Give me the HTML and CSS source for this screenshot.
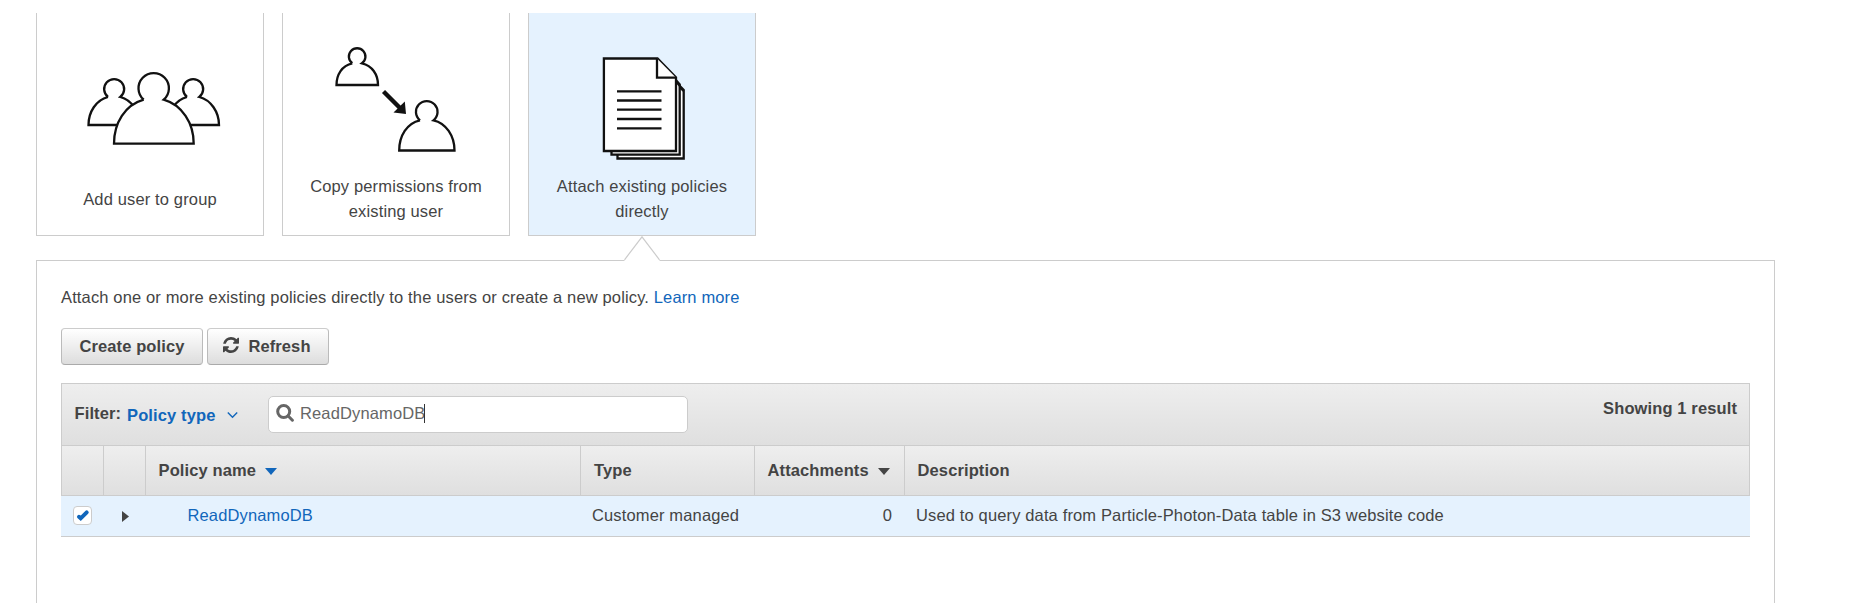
FILE: index.html
```html
<!DOCTYPE html>
<html lang="en">
<head>
<meta charset="utf-8">
<title>Set permissions</title>
<link rel="stylesheet" href="styles.css">
</head>
<body>
<div class="options">
  <div class="card">
    <svg class="art" viewBox="37 13 226 150">
      <path d="M108 97A10 10 0 1 1 120.3 97C132 100 139.500 112 139.500 125H88.500C88.500 112 96 100 108 97"/>
      <path d="M187 97A10 10 0 1 1 199.300 97C211 100 219 112 219 125H168C168 112 175 100 187 97"/>
      <path d="M143.700 99.700A15.200 15.200 0 1 1 163.700 99.700C182 105 193.700 123 193.700 143.700H114C114 123 125 105 143.700 99.700"/>
    </svg>
    <div class="label">Add user to group</div>
  </div>
  <div class="card">
    <svg class="art" viewBox="283 13 226 150">
      <path d="M352.300 63.300A8.300 8.300 0 1 1 362 63.300C372 65.500 378 74.500 378 85H336.500C336.500 74.500 342 65.500 352.300 63.300"/>
      <path d="M420 120.300A10.800 10.800 0 1 1 433.500 120.300C446 123 454.500 136 454.500 150.500H399.200C399.200 136 407 123 420 120.300"/>
      <path class="shaft" d="M383.500 91.500L400 108"/>
      <path class="head" d="M406 114L393.500 112.500L404.800 101.500Z"/>
    </svg>
    <div class="label">Copy permissions from<br>existing user</div>
  </div>
  <div class="card selected">
    <svg class="art" viewBox="529 13 226 150">
      <path d="M617.500 151V158.500H683.700V90L676 82V151Z"/>
      <path d="M678 86L683.700 91"/>
      <path d="M611.500 150V154.700H679.700V84.500L675 79V150Z"/>
      <path d="M675 80.500L680 86"/>
      <path d="M603.900 58.500H657.500L676 77.500V151H603.900Z"/>
      <path d="M657 58.500V77.700H676"/>
      <path d="M617 91.300h44.500M617 100.500h44.500M617 109.700h44.500M617 119h44.500M617 128.300h44.500"/>
    </svg>
    <div class="label">Attach existing policies<br>directly</div>
  </div>
</div>
<div class="panel">
  <svg class="notch" viewBox="0 0 36 25"><path d="M0.500 24L18 0.800L35.500 24V25H0.500Z" fill="#fff"/><path d="M0.500 23.800L18 0.800L35.500 23.800" fill="none" stroke="#ccc" stroke-width="1.200"/></svg>
  <p class="intro">Attach one or more existing policies directly to the users or create a new policy. <a>Learn more</a></p>
  <div class="buttons">
    <button class="btn create">Create policy</button>
    <button class="btn refresh"><svg class="sync" viewBox="0 0 1536 1536"><path fill="#444" d="M1511 928q0 5-1 7-64 268-268 434.500T764 1536q-146 0-282.500-55T238 1324l-129 129q-19 19-45 19t-45-19-19-45V960q0-26 19-45t45-19h448q26 0 45 19t19 45-19 45l-137 137q71 66 161 102t187 36q134 0 250-65t186-179q11-17 53-117 8-23 30-23h192q13 0 22.500 9.500t9.500 22.500zM1536 128v448q0 26-19 45t-45 19h-448q-26 0-45-19t-19-45 19-45l138-138Q969 256 768 256q-134 0-250 65T332 500q-11 17-53 117-8 23-30 23H50q-13 0-22.500-9.500T18 608v-7q65-268 270-434.500T768 0q146 0 284 55.500T1297 212l130-129q19-19 45-19t45 19 19 45z"/></svg>Refresh</button>
  </div>
  <div class="table">
    <div class="filter">
      <span class="filter-label">Filter:</span>
      <span class="filter-type">Policy type</span>
      <svg class="chevron" viewBox="0 0 11 8"><path d="M0.800 1.500L5.500 6.300L10.200 1.500" fill="none" stroke="#1166bb" stroke-width="1.400"/></svg>
      <div class="search">
        <svg class="lens" viewBox="0 0 18 18"><circle cx="7.700" cy="7.500" r="6" fill="none" stroke="#666" stroke-width="3"/><path d="M12.200 12L16.400 16.200" stroke="#666" stroke-width="3" stroke-linecap="round"/></svg>
        <span>ReadDynamoDB</span><i class="caret"></i>
      </div>
      <span class="count">Showing 1 result</span>
    </div>
    <div class="row heading">
      <div></div><div></div>
      <div>Policy name<svg class="sort" viewBox="0 0 12 7"><path d="M0 0H12L6 7Z" fill="#1166bb"/></svg></div>
      <div class="type">Type</div>
      <div>Attachments<svg class="sort" viewBox="0 0 12 7"><path d="M0 0H12L6 7Z" fill="#444"/></svg></div>
      <div>Description</div>
    </div>
    <div class="row item">
      <div class="check"><span class="box"><svg viewBox="0 0 17 17"><path d="M5 9.800L6.700 11.300L12.700 5.300" fill="none" stroke="#1166bb" stroke-width="4" stroke-linecap="round"/></svg></span></div>
      <div class="expand"><svg viewBox="0 0 7 11"><path d="M0 0L7 5.500L0 11Z" fill="#444"/></svg></div>
      <div class="name"><a>ReadDynamoDB</a></div>
      <div>Customer managed</div>
      <div class="number">0</div>
      <div>Used to query data from Particle-Photon-Data table in S3 website code</div>
    </div>
  </div>
</div>
</body>
</html>
```
FILE: styles.css
```css
* { box-sizing: border-box; }
body {
  margin: 0;
  height: 603px;
  padding: 13px 98px 0 36px;
  display: flex;
  flex-direction: column;
  background: #fff;
  color: #444;
  font: 16.5px/25px "Liberation Sans", Arial, sans-serif;
  letter-spacing: 0.14px;
}
svg { display: block; flex: none; }
a { color: #1166bb; }
.options { display: flex; gap: 18px; flex: none; }
.card { width: 228px; height: 223px; border: 1px solid #ccc; border-top: 0; display: flex; flex-direction: column; }
.selected { background: #e5f2fe; }
.art { width: 226px; height: 150px; }
.art path { fill: #fff; stroke: #111; stroke-width: 2.3; }
.art .shaft { stroke-width: 4.4; }
.art .head { fill: #111; stroke: none; }
.label { flex: 1; display: flex; align-items: center; justify-content: center; text-align: center; }
.panel { position: relative; flex: 1; margin-top: 24px; border: 1px solid #ccc; border-bottom: 0; padding: 24px 24px 0; }
.notch { position: absolute; left: 587px; top: -25px; width: 36px; height: 25px; }
.intro { margin: 0; }
.buttons { display: flex; gap: 4px; margin-top: 18px; }
.btn {
  height: 37px;
  padding: 0;
  border: 1px solid #bbb;
  border-top-color: #ccc;
  border-bottom-color: #aaa;
  border-radius: 4px;
  background: linear-gradient(#fff, #ddd);
  color: #444;
  font: bold 16.5px/25px "Liberation Sans", Arial, sans-serif;
  letter-spacing: 0.1px;
  display: flex;
  align-items: center;
  justify-content: center;
}
.create { width: 142px; }
.refresh { width: 122px; gap: 9px; padding-right: 2px; }
.sync { width: 16px; height: 16px; margin-top: -3px; }
.table { margin-top: 18px; }
.filter {
  height: 63px;
  border: 1px solid #ccc;
  background: linear-gradient(#eee, #dfdfdf);
  display: flex;
  align-items: flex-start;
  padding: 12px 12px 0 12.5px;
  font-weight: bold;
  letter-spacing: 0.12px;
}
.filter-label { margin-top: 5px; width: 52.5px; }
.filter-type { margin-top: 7px; color: #1166bb; width: 100px; }
.chevron { width: 11px; height: 8px; margin-top: 15px; }
.search {
  margin-left: 30px;
  width: 420px;
  height: 37px;
  border: 1px solid #ccc;
  border-radius: 5px;
  background: #fff;
  color: #666;
  font-weight: normal;
  letter-spacing: 0.13px;
  display: flex;
  align-items: flex-start;
  padding: 4px 7px;
}
.lens { width: 18px; height: 18px; margin: 3px 6px 0 0; }
.caret { width: 1px; height: 19px; background: #333; margin: 3px 0 0 -1px; }
.count { margin-left: auto; }
.row { display: grid; grid-template-columns: 42px 42px 435px 174px 150px 1fr; }
.heading { height: 50px; grid-template-columns: 41px 42px 435px 174px 150px 1fr; border: 1px solid #ccc; border-top: 0; background: linear-gradient(#eee, #dfdfdf); font-weight: bold; letter-spacing: 0.12px; }
.heading div { border-left: 1px solid #ccc; display: flex; align-items: center; padding-left: 12.5px; }
.heading div:first-child { border-left: 0; }
.heading .type { padding-left: 13px; }
.sort { width: 12px; height: 7px; margin: 2px 0 0 9px; }
.item { height: 41px; background: #e5f2fe; border-bottom: 1px solid #ccc; }
.item div { display: flex; align-items: center; padding: 0 0 2px 12px; }
.box { width: 19px; height: 19px; border: 1px solid #ccc; border-radius: 4px; background: #fff; }
.item .check { padding-bottom: 1px; }
.item .expand { padding: 0 0 0 19px; }
.expand svg { width: 7px; height: 11px; margin-top: 1px; }
.item .name { padding-left: 42.5px; }
.item .number { justify-content: flex-end; padding-right: 12px; }
```
